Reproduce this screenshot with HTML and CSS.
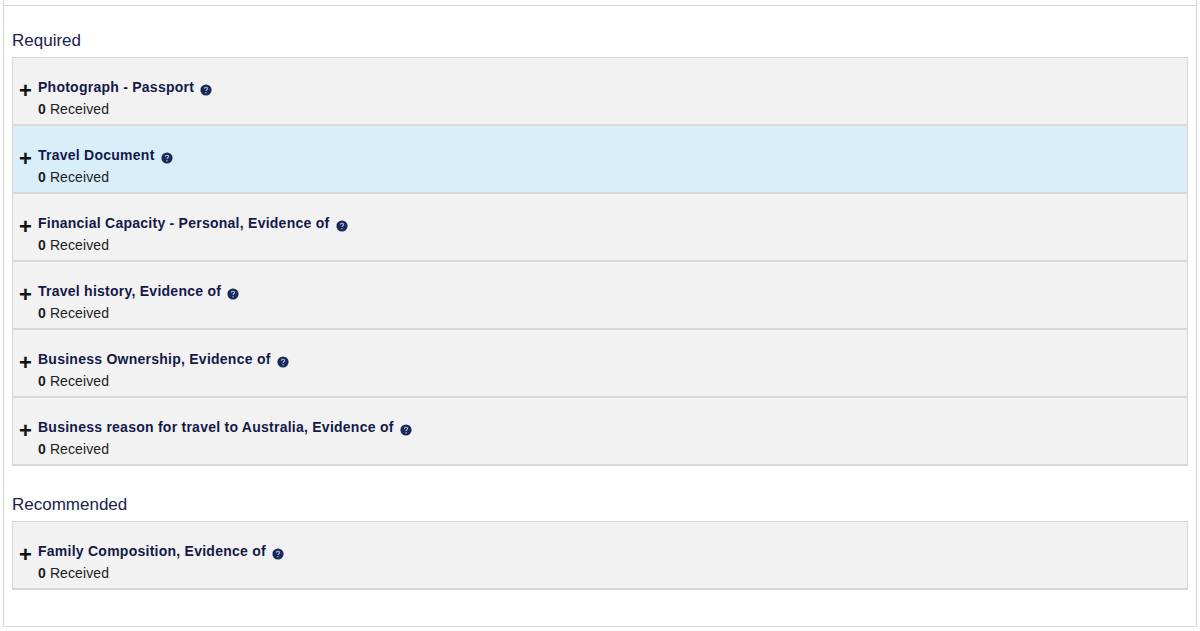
FILE: index.html
```html
<!DOCTYPE html>
<html lang="en">
<head>
    <meta charset="UTF-8">
    <title>Attach documents</title>
    <link rel="stylesheet" href="styles.css">
</head>
<body>
    <!-- help icon, reused on every row -->
    <svg class="icon-defs" width="0" height="0">
        <symbol id="help" viewBox="0 0 12 12">
            <circle cx="6" cy="6" r="5.6" fill="#1b2a5c"/>
            <path d="M4.4 4.8c0-1 .7-1.6 1.6-1.6s1.6.6 1.6 1.4c0 1.2-1.6 1.2-1.6 2.5" fill="none" stroke="#b9c2d6" stroke-width="1.1"/>
            <circle cx="6" cy="8.8" r=".7" fill="#b9c2d6"/>
        </symbol>
    </svg>

    <div class="panel">
        <div class="panel-top"></div>

        <h2 class="group-title group-first">Required</h2>
        <ul class="doc-list">
            <li class="doc-row">
                <span class="toggle">+</span>
                <div class="doc-info">
                    <div class="doc-name">Photograph - Passport <svg class="help"><use href="#help"/></svg></div>
                    <div class="doc-count"><b>0</b> Received</div>
                </div>
            </li>
            <li class="doc-row doc-row-active">
                <span class="toggle">+</span>
                <div class="doc-info">
                    <div class="doc-name">Travel Document <svg class="help"><use href="#help"/></svg></div>
                    <div class="doc-count"><b>0</b> Received</div>
                </div>
            </li>
            <li class="doc-row">
                <span class="toggle">+</span>
                <div class="doc-info">
                    <div class="doc-name">Financial Capacity - Personal, Evidence of <svg class="help"><use href="#help"/></svg></div>
                    <div class="doc-count"><b>0</b> Received</div>
                </div>
            </li>
            <li class="doc-row">
                <span class="toggle">+</span>
                <div class="doc-info">
                    <div class="doc-name">Travel history, Evidence of <svg class="help"><use href="#help"/></svg></div>
                    <div class="doc-count"><b>0</b> Received</div>
                </div>
            </li>
            <li class="doc-row">
                <span class="toggle">+</span>
                <div class="doc-info">
                    <div class="doc-name">Business Ownership, Evidence of <svg class="help"><use href="#help"/></svg></div>
                    <div class="doc-count"><b>0</b> Received</div>
                </div>
            </li>
            <li class="doc-row">
                <span class="toggle">+</span>
                <div class="doc-info">
                    <div class="doc-name">Business reason for travel to Australia, Evidence of <svg class="help"><use href="#help"/></svg></div>
                    <div class="doc-count"><b>0</b> Received</div>
                </div>
            </li>
        </ul>

        <h2 class="group-title">Recommended</h2>
        <ul class="doc-list">
            <li class="doc-row">
                <span class="toggle">+</span>
                <div class="doc-info">
                    <div class="doc-name">Family Composition, Evidence of <svg class="help"><use href="#help"/></svg></div>
                    <div class="doc-count"><b>0</b> Received</div>
                </div>
            </li>
        </ul>
    </div>
</body>
</html>
```

FILE: styles.css
```css
/* base */
body {
    margin: 0;
    background: #fff;
    color: #222;
    font-family: "Liberation Sans", Arial, sans-serif;
    font-size: 14px;
}

.icon-defs {
    position: absolute;
}

/* outer panel */
.panel {
    margin: 0 3px;
    height: 627px;
    padding: 0 8px;
    box-sizing: border-box;
    border: 1px solid #d8d8d8;
    border-top: none;
}

.panel-top {
    height: 5px;
    margin: 0 -8px;
    border-bottom: 1px solid #d8d8d8;
}

/* group headings */
.group-title {
    margin: 29px 0 6px;
    font-size: 17px;
    font-weight: normal;
    line-height: 20px;
    color: #1c2150;
}

.group-first {
    margin-top: 25px;
}

/* document list */
.doc-list {
    margin: 0;
    padding: 0;
    list-style: none;
    border: 1px solid #d4d4d4;
    border-bottom: none;
}

.doc-row {
    display: flex;
    align-items: center;
    height: 68px;
    padding-left: 6px;
    box-sizing: border-box;
    background: #f2f2f2;
    border-bottom: 2px solid #d8d8d8;
}

.doc-row-active {
    background: #d8effa;
}

.toggle {
    width: 19px;
    font-size: 22px;
    font-weight: bold;
    line-height: 20px;
    color: #111;
}

.doc-info {
    padding-top: 14px;
}

.doc-name {
    font-weight: bold;
    line-height: 22px;
    letter-spacing: 0.25px;
    color: #14194a;
}

.doc-count {
    line-height: 22px;
    letter-spacing: 0.1px;
}

.help {
    width: 12px;
    height: 12px;
    margin-left: 2px;
    vertical-align: -4px;
}
```
